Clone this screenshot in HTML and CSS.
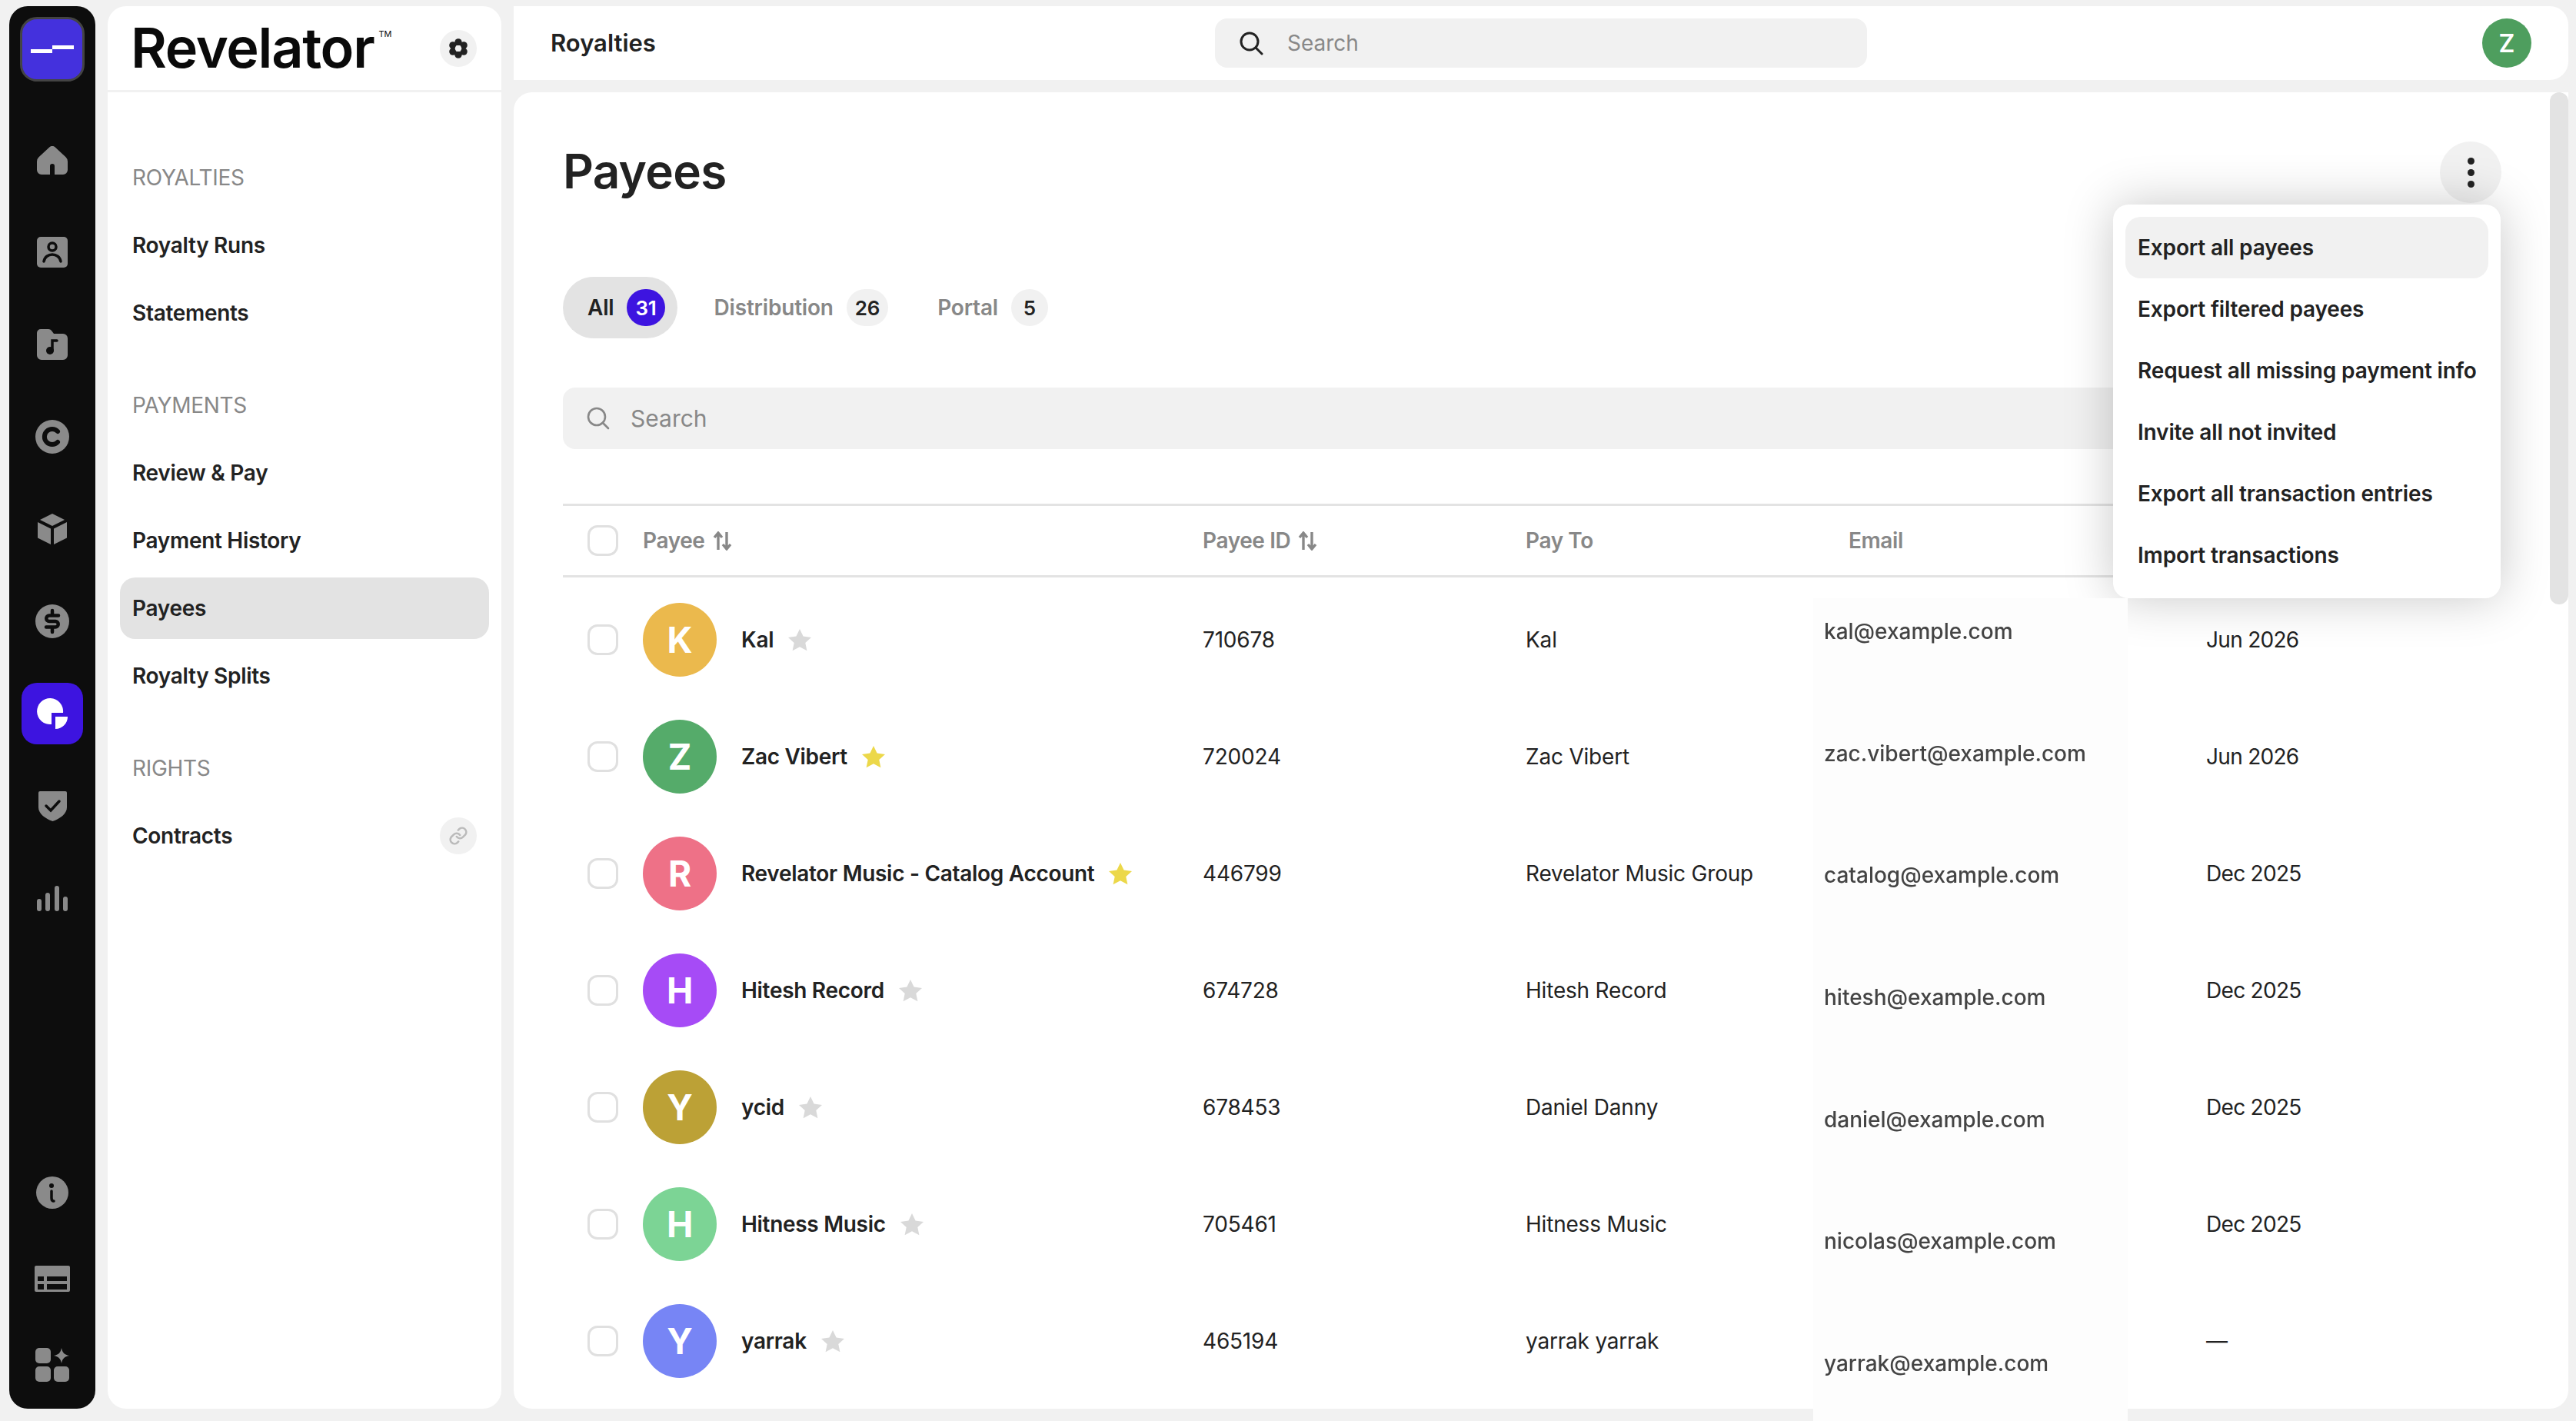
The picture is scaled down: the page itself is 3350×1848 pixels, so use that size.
FILE: index.html
```html
<!DOCTYPE html>
<html lang="en">
<head>
  <meta charset="UTF-8" />
  <title>Payees - Revelator</title>
  <link rel="stylesheet" href="styles.css">
</head>
<body>

<svg class="defs" width="0" height="0">
  <symbol id="star" viewBox="0 0 32 30">
    <path d="M16 1l4.6 9.6 10.4 1.3-7.7 7.1 2.1 10.3L16 24.2 6.600 29.300l2.100-10.300L1 11.900l10.400-1.300z" stroke-linejoin="round"/>
  </symbol>
  <symbol id="sort" viewBox="0 0 25 25">
    <path d="M7 24V3M2 8l5-6 5 6M18 1v21M13 17l5 6 5-6" fill="none" stroke="#888" stroke-width="3.400"/>
  </symbol>
</svg>

<!-- Rail -->
<nav class="rail">
  <div class="rail-logo">
    <svg width="56" height="10" viewBox="0 0 56 10"><path d="M0 5h28V0h28v5H28v5H0z" fill="#fff"/></svg>
  </div>
  <div class="rail-list">
    <a class="rail-item"><svg width="40" height="37" viewBox="0 0 40 37"><path class="g" d="M16.500 1.300a5 5 0 0 1 7 0l14 13a8 8 0 0 1 2.500 5.700V31a6 6 0 0 1-6 6H23V26a3 3 0 0 0-6 0v11H6a6 6 0 0 1-6-6V20a8 8 0 0 1 2.500-5.700z"/></svg></a>
    <a class="rail-item"><svg width="40" height="40" viewBox="0 0 40 40"><rect class="g" width="40" height="40" rx="5"/><circle class="s" cx="20" cy="13" r="5"/><path class="s" d="M9 32c2-12 20-12 22 0"/></svg></a>
    <a class="rail-item"><svg width="40" height="40" viewBox="0 0 40 40"><path class="g" d="M0 5a5 5 0 0 1 5-5h10a5 5 0 0 1 4 2l3 4h12a6 6 0 0 1 6 6v22a6 6 0 0 1-6 6H6a6 6 0 0 1-6-6z"/><circle class="d" cx="17" cy="28" r="5"/><path class="s" d="M20 28V15h6"/></svg></a>
    <a class="rail-item"><svg width="44" height="44" viewBox="0 0 44 44"><circle class="g" cx="22" cy="22" r="22"/><path class="s w" d="M29 15a10 10 0 1 0 0 14"/></svg></a>
    <a class="rail-item"><svg width="38" height="40" viewBox="0 0 38 40"><path class="g" d="M19 0l16 8-16 8-16-8zM0 11l17 8.500V40L0 31.500zM38 11l-17 8.500V40l17-8.500z"/></svg></a>
    <a class="rail-item"><svg width="44" height="44" viewBox="0 0 44 44"><circle class="g" cx="22" cy="22" r="22"/><path class="s s4" d="M30 14.500H18a3.700 3.700 0 0 0 0 7.500h8a3.700 3.700 0 0 1 0 7.500H14M22 8v6M22 30v6"/></svg></a>
    <a class="rail-item rail-active"><svg width="40" height="40" viewBox="0 0 40 40"><path fill="#fff" d="M34 19H19v15A17 17 0 1 1 34 19zM24 24h16a16 16 0 0 1-16 16z"/></svg></a>
    <a class="rail-item"><svg width="37" height="39" viewBox="0 0 37 39"><path class="g" d="M2 0h33a2 2 0 0 1 2 2v19c0 8-9 15-18.500 18C9 36 0 29 0 21V2a2 2 0 0 1 2-2z"/><path class="s" d="M10 19l6 6 11-12"/></svg></a>
    <a class="rail-item"><svg width="40" height="33" viewBox="0 0 40 33"><rect class="g" y="17" width="6" height="16" rx="3"/><rect class="g" x="11" y="9" width="6" height="24" rx="3"/><rect class="g" x="23" width="6" height="33" rx="3"/><rect class="g" x="34" y="14" width="6" height="19" rx="3"/></svg></a>
  </div>
  <div class="rail-list rail-bottom">
    <a class="rail-item"><svg width="42" height="42" viewBox="0 0 42 42"><circle class="g" cx="21" cy="21" r="21"/><circle class="d" cx="20" cy="12" r="3"/><path class="s" d="M20 19v9c0 3 1 4 3 4"/></svg></a>
    <a class="rail-item"><svg width="46" height="34" viewBox="0 0 46 34"><rect class="g" width="46" height="34" rx="2"/><path class="d" d="M4 14h8v6H4zM16 14h26v6H16zM4 24h8v7H4zM16 24h26v7H16z"/></svg></a>
    <a class="rail-item"><svg width="44" height="44" viewBox="0 0 44 44"><rect class="g" width="20" height="20" rx="5"/><rect class="g" y="24" width="20" height="20" rx="5"/><rect class="g" x="24" y="24" width="20" height="20" rx="5"/><path class="g" d="M34 0c1 6 4 9 10 10-6 1-9 4-10 10-1-6-4-9-10-10 6-1 9-4 10-10z"/></svg></a>
  </div>
</nav>

<!-- Sidebar -->
<aside class="sidebar">
  <div class="side-head">
    <div class="brand">Revelator<sup>TM</sup></div>
    <button class="round-btn">
      <svg width="28" height="28" viewBox="0 0 24 24"><g fill="#222"><circle cx="12" cy="5" r="4"/><circle cx="18.100" cy="8.500" r="4"/><circle cx="18.100" cy="15.500" r="4"/><circle cx="12" cy="19" r="4"/><circle cx="5.900" cy="15.500" r="4"/><circle cx="5.900" cy="8.500" r="4"/></g><circle cx="12" cy="12" r="3.500" fill="#f1f1f1"/></svg>
    </button>
  </div>
  <div class="side-nav">
    <section class="side-group">
      <h4>ROYALTIES</h4>
      <a class="side-item">Royalty Runs</a>
      <a class="side-item">Statements</a>
    </section>
    <section class="side-group">
      <h4>PAYMENTS</h4>
      <a class="side-item">Review &amp; Pay</a>
      <a class="side-item">Payment History</a>
      <a class="side-item selected">Payees</a>
      <a class="side-item">Royalty Splits</a>
    </section>
    <section class="side-group">
      <h4>RIGHTS</h4>
      <a class="side-item">Contracts
        <span class="round-btn">
          <svg width="26" height="26" viewBox="0 0 24 24" fill="none" stroke="#bbb" stroke-width="2.400" stroke-linecap="round"><path d="M10 13a5 5 0 0 0 7.500.5l3-3a5 5 0 0 0-7-7l-1.700 1.700"/><path d="M14 11a5 5 0 0 0-7.500-.5l-3 3a5 5 0 0 0 7 7l1.700-1.700"/></svg>
        </span>
      </a>
    </section>
  </div>
</aside>

<div class="main">
  <header class="topbar">
    <div class="top-title">Royalties</div>
    <div class="top-search">
      <svg width="32" height="32" viewBox="0 0 32 32" fill="none" stroke="#222" stroke-width="3" stroke-linecap="round"><circle cx="14" cy="14" r="11"/><path d="M22 22l8 8"/></svg>
      <span>Search</span>
    </div>
    <div class="top-avatar">Z</div>
  </header>

  <main class="content">
    <div class="page-head">
      <h1>Payees</h1>
      <button class="kebab"><i></i><i></i><i></i></button>
    </div>

    <div class="tabs">
      <a class="tab active">All <b class="count">31</b></a>
      <a class="tab">Distribution <b class="count">26</b></a>
      <a class="tab">Portal <b class="count">5</b></a>
    </div>

    <div class="search">
      <svg width="30" height="30" viewBox="0 0 30 30" fill="none" stroke="#888" stroke-width="2.600" stroke-linecap="round"><circle cx="13" cy="13" r="11"/><path d="M21 21l7 7"/></svg>
      <span>Search</span>
    </div>

    <div class="table">
      <div class="row head">
        <div class="cell-name"><span class="check"></span><span class="head-label">Payee</span><svg class="sort"><use href="#sort"/></svg></div>
        <div>Payee ID<svg class="sort"><use href="#sort"/></svg></div>
        <div>Pay To</div>
        <div>Email</div>
        <div></div>
      </div>
      <div class="table-body">
        <div class="row">
          <div class="cell-name"><span class="check"></span><span class="avatar a-yellow">K</span><span class="name">Kal</span><svg class="star"><use href="#star"/></svg></div>
          <div>710678</div><div>Kal</div><div></div><div class="date">Jun 2026</div>
        </div>
        <div class="row">
          <div class="cell-name"><span class="check"></span><span class="avatar a-green">Z</span><span class="name">Zac Vibert</span><svg class="star on"><use href="#star"/></svg></div>
          <div>720024</div><div>Zac Vibert</div><div></div><div class="date">Jun 2026</div>
        </div>
        <div class="row">
          <div class="cell-name"><span class="check"></span><span class="avatar a-pink">R</span><span class="name">Revelator Music - Catalog Account</span><svg class="star on"><use href="#star"/></svg></div>
          <div>446799</div><div>Revelator Music Group</div><div></div><div class="date">Dec 2025</div>
        </div>
        <div class="row">
          <div class="cell-name"><span class="check"></span><span class="avatar a-purple">H</span><span class="name">Hitesh Record</span><svg class="star"><use href="#star"/></svg></div>
          <div>674728</div><div>Hitesh Record</div><div></div><div class="date">Dec 2025</div>
        </div>
        <div class="row">
          <div class="cell-name"><span class="check"></span><span class="avatar a-olive">Y</span><span class="name">ycid</span><svg class="star"><use href="#star"/></svg></div>
          <div>678453</div><div>Daniel Danny</div><div></div><div class="date">Dec 2025</div>
        </div>
        <div class="row">
          <div class="cell-name"><span class="check"></span><span class="avatar a-mint">H</span><span class="name">Hitness Music</span><svg class="star"><use href="#star"/></svg></div>
          <div>705461</div><div>Hitness Music</div><div></div><div class="date">Dec 2025</div>
        </div>
        <div class="row">
          <div class="cell-name"><span class="check"></span><span class="avatar a-blue">Y</span><span class="name">yarrak</span><svg class="star"><use href="#star"/></svg></div>
          <div>465194</div><div>yarrak yarrak</div><div></div><div class="date">—</div>
        </div>
      </div>
    </div>

    <div class="menu">
      <a class="menu-item hover">Export all payees</a>
      <a class="menu-item">Export filtered payees</a>
      <a class="menu-item">Request all missing payment info</a>
      <a class="menu-item">Invite all not invited</a>
      <a class="menu-item">Export all transaction entries</a>
      <a class="menu-item">Import transactions</a>
    </div>

    <div class="scroll-thumb"></div>
  </main>
</div>

<!-- Emails, laid over the column -->
<div class="email-patch">
  <div>kal@example.com</div>
  <div>zac.vibert@example.com</div>
  <div>catalog@example.com</div>
  <div>hitesh@example.com</div>
  <div>daniel@example.com</div>
  <div>nicolas@example.com</div>
  <div>yarrak@example.com</div>
</div>

</body>
</html>
```

FILE: styles.css
```css
* {
  margin: 0;
  padding: 0;
  box-sizing: border-box;
}

body {
  position: relative;
  width: 3350px;
  height: 1848px;
  overflow: hidden;
  display: flex;
  gap: 16px;
  padding: 8px 10px 16px 12px;
  background: #f1f1f1;
  font-family: Inter, "Noto Sans", sans-serif;
  font-size: 28px;
  color: #222;
}

.defs { position: absolute; }

/* rail */
.rail {
  width: 112px;
  flex: none;
  display: flex;
  flex-direction: column;
  align-items: center;
  padding: 14px 0 17px;
  background: #0d0d0d;
  border-radius: 24px;
}

.rail-logo {
  width: 84px;
  height: 84px;
  flex: none;
  display: flex;
  align-items: center;
  justify-content: center;
  background: #4431dd;
  border: 3px solid #444;
  border-radius: 22px;
  box-shadow: 0 6px 0 -6px #4a4a4a, 0 12px 0 -14px #333;
}

.rail-list {
  display: flex;
  flex-direction: column;
  gap: 40px;
  margin-top: 62px;
}

.rail-bottom {
  gap: 32px;
  margin-top: auto;
}

.rail-item {
  width: 80px;
  height: 80px;
  display: flex;
  align-items: center;
  justify-content: center;
  border-radius: 20px;
}

.rail-active { background: #3d14e0; }

.rail .g { fill: #8a8a8a; }
.rail .d { fill: #0d0d0d; }
.rail .s { fill: none; stroke: #0d0d0d; stroke-width: 3.500; stroke-linecap: round; }
.rail .s.w { stroke-width: 6; }
.rail .s.s4 { stroke-width: 4.500; }

/* sidebar */
.sidebar {
  width: 512px;
  flex: none;
  background: #fff;
  border-radius: 24px;
}

.side-head {
  height: 112px;
  display: flex;
  align-items: center;
  justify-content: space-between;
  padding: 0 32px;
  border-bottom: 3px solid #f1f1f1;
}

.brand {
  font-size: 72px;
  font-weight: 600;
  letter-spacing: -1.300px;
  color: #0a0a0a;
  line-height: 1;
  margin-top: -2px;
  margin-left: -2px;
}

.brand sup {
  font-size: 11px;
  font-weight: 400;
  letter-spacing: 0;
  vertical-align: 40px;
  margin-left: 6px;
}

.round-btn {
  width: 48px;
  height: 48px;
  display: flex;
  align-items: center;
  justify-content: center;
  border: none;
  border-radius: 50%;
  background: #f1f1f1;
}

.side-nav {
  display: flex;
  flex-direction: column;
  gap: 60px;
  padding: 91px 16px 0;
}

.side-group h4 {
  height: 40px;
  line-height: 40px;
  margin: 0 0 28px 16px;
  font-size: 28px;
  font-weight: 400;
  letter-spacing: -0.300px;
  color: #888;
}

.side-item {
  height: 80px;
  display: flex;
  align-items: center;
  justify-content: space-between;
  padding: 0 16px;
  margin-bottom: 8px;
  font-weight: 600;
  letter-spacing: -0.300px;
  border-radius: 20px;
}

.side-group .side-item:last-child { margin-bottom: 0; }

.side-item.selected { background: #e3e3e3; }

/* top bar */
.main {
  flex: 1;
  min-width: 0;
  display: flex;
  flex-direction: column;
  gap: 16px;
}

.topbar {
  height: 96px;
  flex: none;
  display: flex;
  align-items: center;
  padding: 0 48px;
  background: #fff;
  border-radius: 0 24px 24px 0;
}

.top-title {
  width: 864px;
  font-size: 31px;
  font-weight: 600;
  margin-top: -2px;
}

.top-search {
  width: 848px;
  height: 64px;
  display: flex;
  align-items: center;
  gap: 31px;
  padding: 0 31px;
  background: #f1f1f1;
  border-radius: 16px;
  color: #888;
}

.top-avatar {
  width: 64px;
  height: 64px;
  margin-left: auto;
  display: flex;
  align-items: center;
  justify-content: center;
  background: #4e9e5e;
  color: #fff;
  font-size: 32px;
  font-weight: 600;
  border-radius: 50%;
}

/* content */
.content {
  position: relative;
  flex: 1;
  padding: 64px 88px 0 64px;
  background: #fff;
  border-radius: 24px 0 24px 24px;
}

.page-head {
  display: flex;
  align-items: center;
  justify-content: space-between;
  height: 80px;
}

.page-head h1 {
  font-size: 62px;
  font-weight: 600;
  letter-spacing: -0.700px;
  margin-top: -4px;
}

.kebab {
  width: 80px;
  height: 80px;
  margin-right: -1px;
  display: flex;
  flex-direction: column;
  align-items: center;
  justify-content: center;
  gap: 6px;
  border: none;
  border-radius: 50%;
  background: #f1f1f1;
}

.kebab i {
  width: 9px;
  height: 9px;
  border-radius: 50%;
  background: #222;
}

.tabs {
  display: flex;
  gap: 16px;
  margin: 96px 0 64px;
}

.tab {
  height: 80px;
  display: flex;
  align-items: center;
  gap: 17px;
  padding: 0 16px 0 32px;
  border-radius: 40px;
  font-weight: 600;
  letter-spacing: -0.200px;
  color: #888;
}

.tab.active {
  background: #e3e3e3;
  color: #222;
}

.count {
  min-width: 48px;
  height: 48px;
  padding: 0 11px;
  display: flex;
  align-items: center;
  justify-content: center;
  border-radius: 24px;
  background: #f1f1f1;
  color: #222;
  font-size: 26px;
  font-weight: 600;
}

.tab.active .count {
  background: #3d14e0;
  color: #fff;
}

.search {
  height: 80px;
  display: flex;
  align-items: center;
  gap: 27px;
  padding: 0 31px;
  background: #f1f1f1;
  border-radius: 16px;
  font-size: 30px;
  color: #888;
}

.table {
  margin-top: 71px;
  border-top: 3px solid #e3e3e3;
}

.row {
  height: 152px;
  display: grid;
  grid-template-columns: 832px 420px 420px 467px 1fr;
  align-items: center;
  letter-spacing: -0.200px;
}

.row.head {
  height: 93px;
  font-weight: 600;
  letter-spacing: -0.400px;
  color: #888;
  border-bottom: 3px solid #e3e3e3;
}

.table-body { padding-top: 5px; }

.cell-name {
  display: flex;
  align-items: center;
  padding-left: 32px;
}

.check {
  width: 40px;
  height: 40px;
  flex: none;
  margin-right: 32px;
  border: 3px solid #e0e0e0;
  border-radius: 13px;
}

.sort {
  width: 25px;
  height: 25px;
  margin-left: 10px;
  vertical-align: -3px;
}

.avatar {
  width: 96px;
  height: 96px;
  flex: none;
  margin-right: 32px;
  display: flex;
  align-items: center;
  justify-content: center;
  border-radius: 50%;
  color: #fff;
  font-size: 46px;
  font-weight: 700;
}

.a-yellow { background: #ebb94d; }
.a-green { background: #55ab6a; }
.a-pink { background: #ee7187; }
.a-purple { background: #a64bf6; }
.a-olive { background: #bca136; }
.a-mint { background: #7cd495; }
.a-blue { background: #7785f5; }

.name {
  font-weight: 600;
  letter-spacing: -0.300px;
}

.date {
  margin-left: -2px;
  letter-spacing: -0.700px;
}

.star {
  width: 32px;
  height: 30px;
  margin-left: 18px;
  fill: #d9d9d9;
}

.star.on { fill: #ecd84a; }

/* menu */
.menu {
  position: absolute;
  top: 146px;
  right: 88px;
  width: 504px;
  padding: 16px;
  background: #fff;
  border-radius: 20px;
  box-shadow: 0 0 64px rgba(0, 0, 0, 0.22);
}

.menu-item {
  height: 80px;
  display: flex;
  align-items: center;
  padding-left: 16px;
  border-radius: 20px;
  font-weight: 600;
  letter-spacing: -0.150px;
}

.menu-item.hover { background: #f1f1f1; }

.scroll-thumb {
  position: absolute;
  top: 0;
  right: 0;
  width: 24px;
  height: 666px;
  background: #e3e3e3;
  border-radius: 12px;
}

.email-patch {
  position: absolute;
  left: 2358px;
  top: 778px;
  width: 409px;
  height: 1070px;
  padding: 28px 0 0 14px;
  display: grid;
  grid-auto-rows: 30px;
  row-gap: 128.700px;
  background: #fdfdfd;
  color: #444;
  font-weight: 500;
  line-height: 30px;
}

.email-patch div { filter: blur(0.7px); }
```
